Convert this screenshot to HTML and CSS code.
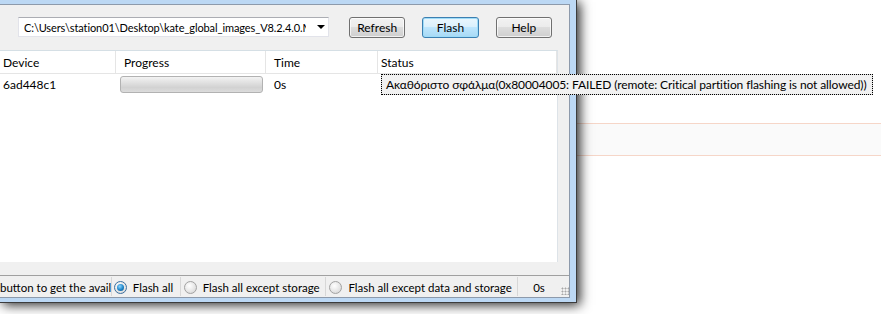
FILE: index.html
```html
<!DOCTYPE html>
<html lang="en">
<head>
    <meta charset="UTF-8">
    <title>Flash tool</title>
    <link rel="stylesheet" href="styles.css">
</head>
<body>
    <div class="window">
        <div class="frame">
            <div class="client">
                <div class="toolbar">
                    <div class="combo">
                        <span class="combo-text">C:\Users\station01\Desktop\kate_global_images_V8.2.4.0.MXB</span>
                        <span class="combo-arrow"></span>
                    </div>
                    <button class="btn">Refresh</button>
                    <button class="btn btn-default">Flash</button>
                    <button class="btn">Help</button>
                </div>

                <div class="list">
                    <div class="row list-head">
                        <div class="cell col-device">Device</div>
                        <div class="cell col-progress">Progress</div>
                        <div class="cell col-time">Time</div>
                        <div class="cell col-status">Status</div>
                    </div>
                    <div class="row">
                        <div class="cell col-device">6ad448c1</div>
                        <div class="cell col-progress"><div class="progress"></div></div>
                        <div class="cell col-time">0s</div>
                        <div class="cell col-status">
                            <div class="status-tip">Ακαθόριστο σφάλμα(0x80004005: FAILED (remote: Critical partition flashing is not allowed))</div>
                        </div>
                    </div>
                </div>

                <div class="statusbar">
                    <div class="sb-part sb-hint"><span>button to get the available devices</span></div>
                    <label class="sb-part sb-flash-all"><span class="radio checked"></span>Flash all</label>
                    <label class="sb-part sb-no-storage"><span class="radio"></span>Flash all except storage</label>
                    <label class="sb-part sb-no-data"><span class="radio"></span>Flash all except data and storage</label>
                    <div class="sb-part sb-time">0s</div>
                    <div class="grip"></div>
                </div>
            </div>
        </div>
    </div>
</body>
</html>
```

FILE: styles.css
```css
body {
    margin: 0;
    width: 881px;
    height: 314px;
    overflow: hidden;
    font-family: Lato, "Liberation Sans", Arial, sans-serif;
    font-size: 12px;
    color: #000;
    background: linear-gradient(to bottom,
        #fff 0 123px,
        #f6d6c8 123px 124px,
        #fafafa 124px 155px,
        #f6d6c8 155px 156px,
        #fff 156px);
}

.window {
    width: 576px;
    border-right: 1px solid #3c3c3c;
    border-bottom: 1px solid #3c3c3c;
    box-shadow: 3px 2px 11px rgba(0, 0, 0, 0.85);
}

.frame {
    border: solid #bcd8f4;
    border-width: 4px 6px 4px 0;
}

.client {
    height: 292px;
    border: 1px solid #8d9aab;
    border-left: none;
    background-color: #f0f0f0;
    display: flex;
    flex-direction: column;
}

/* toolbar */

.toolbar {
    height: 45px;
    box-sizing: border-box;
    padding: 12px 0 0 18px;
    display: flex;
    align-items: flex-start;
}

.combo {
    width: 311px;
    height: 20px;
    box-sizing: border-box;
    border: 1px solid #e2e3ea;
    border-top-color: #abadb3;
    background: #fff;
    display: flex;
    align-items: center;
    padding-left: 5px;
    margin-right: 20px;
    font-size: 11px;
    letter-spacing: -0.1px;
}

.combo-text {
    flex: 1;
    overflow: hidden;
    white-space: nowrap;
}

.combo-arrow {
    width: 0;
    height: 0;
    border-left: 4px solid transparent;
    border-right: 4px solid transparent;
    border-top: 4px solid #000;
    margin: 0 3px 0 11px;
}

.btn {
    width: 58px;
    height: 21px;
    margin-right: 17px;
    padding: 0;
    border: 1px solid #707070;
    border-radius: 3px;
    background: linear-gradient(to bottom, #f2f2f2 0, #ebebeb 50%, #dddddd 50%, #cfcfcf 100%);
    font-family: inherit;
    font-size: 12px;
    color: #000;
    box-shadow: inset 0 0 0 1px rgba(255, 255, 255, 0.7);
}

.btn-default {
    border-color: #3c7fb1;
    background: linear-gradient(to bottom, #eaf6fd 0, #d9f0fc 50%, #bee6fd 50%, #a7d9f5 100%);
    box-shadow: inset 0 0 0 1px #9edcf8;
}

/* device list */

.list {
    width: 558px;
    height: 213px;
    box-sizing: border-box;
    border-top: 1px solid #d5dfe5;
    border-right: 1px solid #dde3e8;
    background: #fff;
}

.row {
    display: flex;
    height: 21px;
    align-items: center;
}

.list-head {
    height: 22px;
    border-bottom: 1px solid #e5e5e5;
}

.list-head .cell {
    height: 22px;
    line-height: 24px;
    border-right: 1px solid #e5e5e5;
}

.cell {
    box-sizing: border-box;
    padding-left: 4px;
    white-space: nowrap;
}

.col-device { width: 116px; padding-left: 3px; }
.col-progress { width: 150px; padding-left: 8px; }
.col-time { width: 112px; padding-left: 8px; }
.col-status { width: 179px; padding-left: 3px; }

.row .col-progress .progress { margin-left: -4px; }

.progress {
    width: 143px;
    height: 17px;
    box-sizing: border-box;
    border: 1px solid #b2b2b2;
    border-radius: 3px;
    background: linear-gradient(to bottom, #f3f3f3 0, #e2e2e2 35%, #d2d2d2 70%, #dcdcdc 100%);
}

.status-tip {
    width: 492px;
    height: 21px;
    line-height: 20px;
    box-sizing: border-box;
    padding-left: 4px;
    border: 1px solid #d9d9d9;
    background: #f1f1f1;
    outline: 1px dotted #000;
    outline-offset: -1px;
    letter-spacing: -0.1px;
}

/* status bar */

.statusbar {
    margin-top: 13px;
    height: 21px;
    border-top: 1px solid #a0a0a0;
    display: flex;
    align-items: center;
    white-space: nowrap;
    font-size: 11.5px;
}

.sb-part {
    height: 19px;
    box-sizing: border-box;
    display: flex;
    align-items: center;
    padding-top: 2px;
    border-right: 1px solid #d7d7d7;
    overflow: hidden;
}

.sb-hint { width: 112px; }
.sb-flash-all { width: 69px; padding-left: 2px; }
.sb-no-storage { width: 146px; padding-left: 3px; }
.sb-no-data { width: 192px; padding-left: 3px; }
.sb-time { width: 42px; justify-content: center; border-right: none; }

.radio {
    width: 13px;
    height: 13px;
    box-sizing: border-box;
    border-radius: 50%;
    border: 1px solid #a2a2a2;
    background: radial-gradient(circle at 40% 35%, #ffffff 0, #e4e4e4 60%, #cfcfcf 100%);
    margin-right: 6px;
    flex: none;
    display: flex;
    align-items: center;
    justify-content: center;
}

.radio.checked {
    border-color: #3b6f9f;
}

.radio.checked::after {
    content: "";
    width: 7px;
    height: 7px;
    border-radius: 50%;
    background: radial-gradient(circle at 40% 35%, #8fd7ff 0, #1c84c8 55%, #0b4d82 100%);
}

.grip {
    width: 8px;
    height: 8px;
    margin: 8px 0 0 1px;
    background: radial-gradient(circle, #a7a7a7 0.8px, transparent 1.2px) 0 0 / 3px 3px;
}
```
